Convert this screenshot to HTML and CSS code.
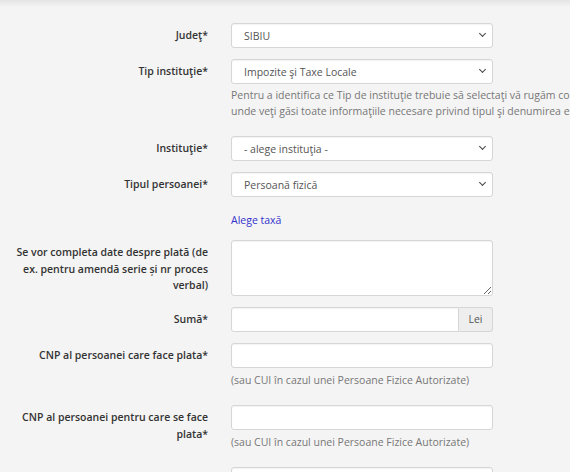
FILE: index.html
```html
<!DOCTYPE html>
<html>
<head>
  <meta charset="UTF-8">
  <title>Plată taxe</title>
  <link rel="stylesheet" href="styles.css">
</head>
<body>

<form class="pay-form">
  <div class="row">
    <label class="lbl">Judeţ*</label>
    <div class="field">
      <span class="sel"><select class="ctrl"><option>SIBIU</option></select></span>
    </div>
  </div>

  <div class="row">
    <label class="lbl">Tip instituţie*</label>
    <div class="field">
      <span class="sel"><select class="ctrl"><option>Impozite şi Taxe Locale</option></select></span>
      <p class="help help-wide">Pentru a identifica ce Tip de instituţie trebuie să selectaţi vă rugăm consultaţi pagina instituţiei<br>unde veţi găsi toate informaţiile necesare privind tipul şi denumirea exactă a acesteia.</p>
    </div>
  </div>

  <div class="row">
    <label class="lbl">Instituţie*</label>
    <div class="field">
      <span class="sel"><select class="ctrl"><option>- alege instituţia -</option></select></span>
    </div>
  </div>

  <div class="row">
    <label class="lbl">Tipul persoanei*</label>
    <div class="field">
      <span class="sel"><select class="ctrl"><option>Persoană fizică</option></select></span>
    </div>
  </div>

  <div class="row">
    <span></span>
    <div class="field">
      <a class="link" href="#">Alege taxă</a>
    </div>
  </div>

  <div class="row">
    <label class="lbl">Se vor completa date despre plată (de ex. pentru amendă serie și nr proces verbal)</label>
    <div class="field">
      <textarea class="ctrl area"></textarea>
    </div>
  </div>

  <div class="row">
    <label class="lbl">Sumă*</label>
    <div class="field">
      <div class="group">
        <input class="ctrl" type="text">
        <span class="addon">Lei</span>
      </div>
    </div>
  </div>

  <div class="row">
    <label class="lbl">CNP al persoanei care face plata*</label>
    <div class="field">
      <input class="ctrl" type="text">
      <p class="help">(sau CUI în cazul unei Persoane Fizice Autorizate)</p>
    </div>
  </div>

  <div class="row">
    <label class="lbl">CNP al persoanei pentru care se face plata*</label>
    <div class="field">
      <input class="ctrl" type="text">
      <p class="help">(sau CUI în cazul unei Persoane Fizice Autorizate)</p>
    </div>
  </div>

  <div class="row">
    <label class="lbl"></label>
    <div class="field">
      <input class="ctrl" type="text">
    </div>
  </div>
</form>

</body>
</html>
```

FILE: styles.css
```css
body {
  margin: 0;
  font-family: "Open Sans", "Liberation Sans", sans-serif;
  font-size: 10.5px;
  color: #333;
  background: #f4f4f4 linear-gradient(#e4e4e4, #f4f4f4 7px) no-repeat;
  overflow: hidden;
}

.pay-form {
  padding-top: 23px;
}

.row {
  display: grid;
  grid-template-columns: 208px 262px;
  column-gap: 23px;
  margin-bottom: 11px;
}

.lbl {
  text-align: right;
  font-weight: 600;
  line-height: 16.5px;
  padding-top: 4px;
}

.field {
  min-width: 0;
}

.ctrl {
  display: block;
  box-sizing: border-box;
  width: 100%;
  height: 25px;
  padding: 0 12px;
  font-family: inherit;
  font-size: 10.5px;
  color: #555;
  background: #fff;
  border: 1px solid #d6d6d6;
  border-radius: 3px;
  box-shadow: inset 0 1px 1px rgba(0, 0, 0, 0.05);
}

.sel {
  position: relative;
  display: block;
}

.sel select {
  appearance: none;
  -webkit-appearance: none;
  padding-left: 12px;
}

.sel::after {
  content: "";
  position: absolute;
  right: 8px;
  top: 8px;
  width: 4px;
  height: 4px;
  border-right: 1.5px solid #444;
  border-bottom: 1.5px solid #444;
  transform: rotate(45deg);
  pointer-events: none;
}

.area {
  height: 56px;
  resize: vertical;
}

.group {
  display: flex;
}

.group .ctrl {
  border-radius: 3px 0 0 3px;
}

.addon {
  flex: none;
  width: 34px;
  box-sizing: border-box;
  line-height: 23px;
  text-align: center;
  color: #555;
  background: #eee;
  border: 1px solid #d6d6d6;
  border-left: none;
  border-radius: 0 3px 3px 0;
}

.help {
  margin: 4px 0 6px;
  line-height: 16px;
  color: #777;
  white-space: nowrap;
}

.help-wide {
  margin-top: 3px;
  margin-bottom: 6px;
}

.link {
  display: block;
  line-height: 17px;
  padding-top: 4px;
  color: #3333cc;
  text-decoration: none;
}
```
